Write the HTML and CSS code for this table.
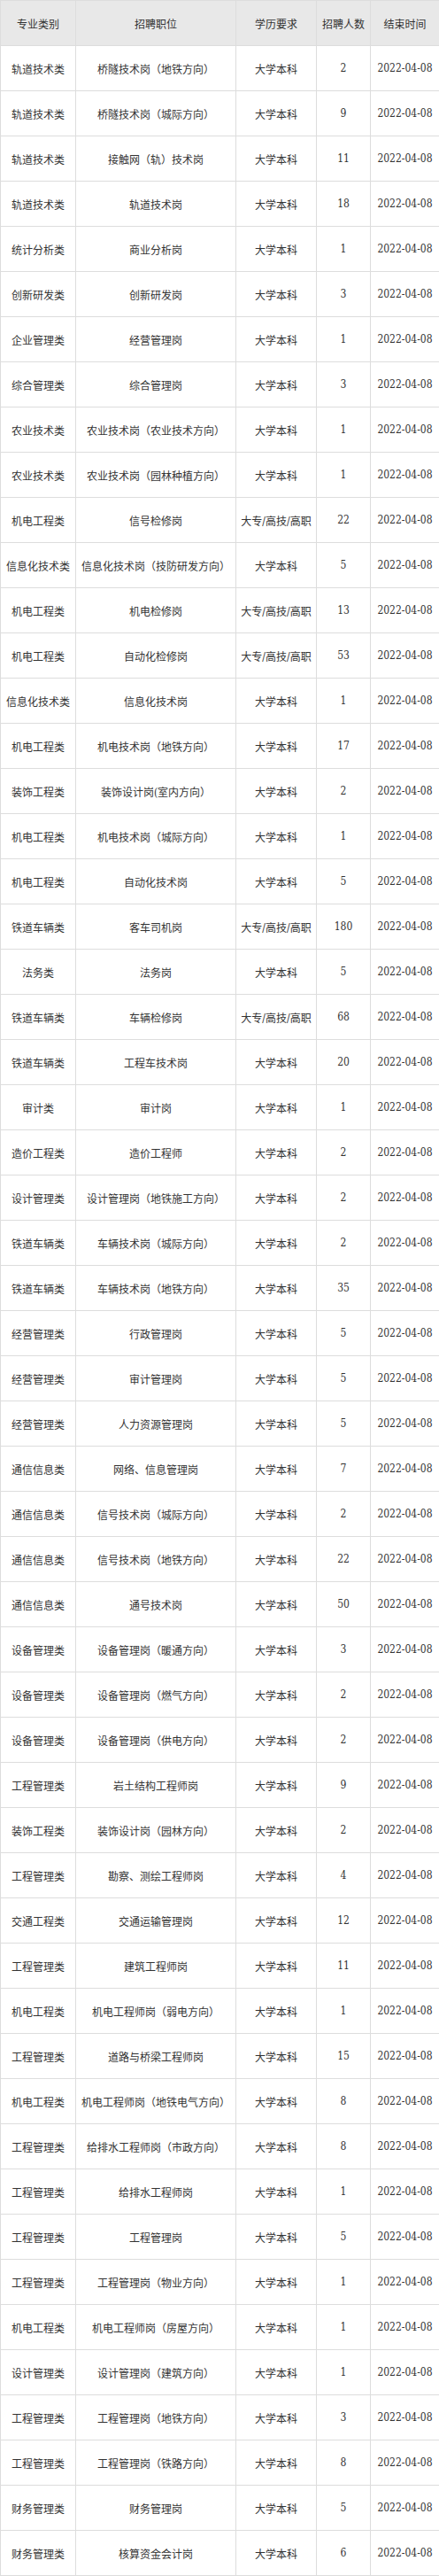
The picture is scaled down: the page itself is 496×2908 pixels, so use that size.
FILE: index.html
```html
<!DOCTYPE html>
<html lang="zh-CN">
<head>
<meta charset="utf-8">
<title>招聘职位</title>
<link rel="stylesheet" href="styles.css">
</head>
<body>
<table class="jobs">
  <colgroup>
    <col class="c-cat"><col class="c-pos"><col class="c-edu"><col class="c-num"><col class="c-date">
  </colgroup>
  <thead>
    <tr><th>专业类别</th><th>招聘职位</th><th>学历要求</th><th>招聘人数</th><th>结束时间</th></tr>
  </thead>
  <tbody>
    <tr><td>轨道技术类</td><td>桥隧技术岗（地铁方向）</td><td>大学本科</td><td>2</td><td>2022-04-08</td></tr>
    <tr><td>轨道技术类</td><td>桥隧技术岗（城际方向）</td><td>大学本科</td><td>9</td><td>2022-04-08</td></tr>
    <tr><td>轨道技术类</td><td>接触网（轨）技术岗</td><td>大学本科</td><td>11</td><td>2022-04-08</td></tr>
    <tr><td>轨道技术类</td><td>轨道技术岗</td><td>大学本科</td><td>18</td><td>2022-04-08</td></tr>
    <tr><td>统计分析类</td><td>商业分析岗</td><td>大学本科</td><td>1</td><td>2022-04-08</td></tr>
    <tr><td>创新研发类</td><td>创新研发岗</td><td>大学本科</td><td>3</td><td>2022-04-08</td></tr>
    <tr><td>企业管理类</td><td>经营管理岗</td><td>大学本科</td><td>1</td><td>2022-04-08</td></tr>
    <tr><td>综合管理类</td><td>综合管理岗</td><td>大学本科</td><td>3</td><td>2022-04-08</td></tr>
    <tr><td>农业技术类</td><td>农业技术岗（农业技术方向）</td><td>大学本科</td><td>1</td><td>2022-04-08</td></tr>
    <tr><td>农业技术类</td><td>农业技术岗（园林种植方向）</td><td>大学本科</td><td>1</td><td>2022-04-08</td></tr>
    <tr><td>机电工程类</td><td>信号检修岗</td><td>大专/高技/高职</td><td>22</td><td>2022-04-08</td></tr>
    <tr><td>信息化技术类</td><td>信息化技术岗（技防研发方向）</td><td>大学本科</td><td>5</td><td>2022-04-08</td></tr>
    <tr><td>机电工程类</td><td>机电检修岗</td><td>大专/高技/高职</td><td>13</td><td>2022-04-08</td></tr>
    <tr><td>机电工程类</td><td>自动化检修岗</td><td>大专/高技/高职</td><td>53</td><td>2022-04-08</td></tr>
    <tr><td>信息化技术类</td><td>信息化技术岗</td><td>大学本科</td><td>1</td><td>2022-04-08</td></tr>
    <tr><td>机电工程类</td><td>机电技术岗（地铁方向）</td><td>大学本科</td><td>17</td><td>2022-04-08</td></tr>
    <tr><td>装饰工程类</td><td>装饰设计岗(室内方向）</td><td>大学本科</td><td>2</td><td>2022-04-08</td></tr>
    <tr><td>机电工程类</td><td>机电技术岗（城际方向）</td><td>大学本科</td><td>1</td><td>2022-04-08</td></tr>
    <tr><td>机电工程类</td><td>自动化技术岗</td><td>大学本科</td><td>5</td><td>2022-04-08</td></tr>
    <tr><td>铁道车辆类</td><td>客车司机岗</td><td>大专/高技/高职</td><td>180</td><td>2022-04-08</td></tr>
    <tr><td>法务类</td><td>法务岗</td><td>大学本科</td><td>5</td><td>2022-04-08</td></tr>
    <tr><td>铁道车辆类</td><td>车辆检修岗</td><td>大专/高技/高职</td><td>68</td><td>2022-04-08</td></tr>
    <tr><td>铁道车辆类</td><td>工程车技术岗</td><td>大学本科</td><td>20</td><td>2022-04-08</td></tr>
    <tr><td>审计类</td><td>审计岗</td><td>大学本科</td><td>1</td><td>2022-04-08</td></tr>
    <tr><td>造价工程类</td><td>造价工程师</td><td>大学本科</td><td>2</td><td>2022-04-08</td></tr>
    <tr><td>设计管理类</td><td>设计管理岗（地铁施工方向）</td><td>大学本科</td><td>2</td><td>2022-04-08</td></tr>
    <tr><td>铁道车辆类</td><td>车辆技术岗（城际方向）</td><td>大学本科</td><td>2</td><td>2022-04-08</td></tr>
    <tr><td>铁道车辆类</td><td>车辆技术岗（地铁方向）</td><td>大学本科</td><td>35</td><td>2022-04-08</td></tr>
    <tr><td>经营管理类</td><td>行政管理岗</td><td>大学本科</td><td>5</td><td>2022-04-08</td></tr>
    <tr><td>经营管理类</td><td>审计管理岗</td><td>大学本科</td><td>5</td><td>2022-04-08</td></tr>
    <tr><td>经营管理类</td><td>人力资源管理岗</td><td>大学本科</td><td>5</td><td>2022-04-08</td></tr>
    <tr><td>通信信息类</td><td>网络、信息管理岗</td><td>大学本科</td><td>7</td><td>2022-04-08</td></tr>
    <tr><td>通信信息类</td><td>信号技术岗（城际方向）</td><td>大学本科</td><td>2</td><td>2022-04-08</td></tr>
    <tr><td>通信信息类</td><td>信号技术岗（地铁方向）</td><td>大学本科</td><td>22</td><td>2022-04-08</td></tr>
    <tr><td>通信信息类</td><td>通号技术岗</td><td>大学本科</td><td>50</td><td>2022-04-08</td></tr>
    <tr><td>设备管理类</td><td>设备管理岗（暖通方向）</td><td>大学本科</td><td>3</td><td>2022-04-08</td></tr>
    <tr><td>设备管理类</td><td>设备管理岗（燃气方向）</td><td>大学本科</td><td>2</td><td>2022-04-08</td></tr>
    <tr><td>设备管理类</td><td>设备管理岗（供电方向）</td><td>大学本科</td><td>2</td><td>2022-04-08</td></tr>
    <tr><td>工程管理类</td><td>岩土结构工程师岗</td><td>大学本科</td><td>9</td><td>2022-04-08</td></tr>
    <tr><td>装饰工程类</td><td>装饰设计岗（园林方向）</td><td>大学本科</td><td>2</td><td>2022-04-08</td></tr>
    <tr><td>工程管理类</td><td>勘察、测绘工程师岗</td><td>大学本科</td><td>4</td><td>2022-04-08</td></tr>
    <tr><td>交通工程类</td><td>交通运输管理岗</td><td>大学本科</td><td>12</td><td>2022-04-08</td></tr>
    <tr><td>工程管理类</td><td>建筑工程师岗</td><td>大学本科</td><td>11</td><td>2022-04-08</td></tr>
    <tr><td>机电工程类</td><td>机电工程师岗（弱电方向）</td><td>大学本科</td><td>1</td><td>2022-04-08</td></tr>
    <tr><td>工程管理类</td><td>道路与桥梁工程师岗</td><td>大学本科</td><td>15</td><td>2022-04-08</td></tr>
    <tr><td>机电工程类</td><td>机电工程师岗（地铁电气方向）</td><td>大学本科</td><td>8</td><td>2022-04-08</td></tr>
    <tr><td>工程管理类</td><td>给排水工程师岗（市政方向）</td><td>大学本科</td><td>8</td><td>2022-04-08</td></tr>
    <tr><td>工程管理类</td><td>给排水工程师岗</td><td>大学本科</td><td>1</td><td>2022-04-08</td></tr>
    <tr><td>工程管理类</td><td>工程管理岗</td><td>大学本科</td><td>5</td><td>2022-04-08</td></tr>
    <tr><td>工程管理类</td><td>工程管理岗（物业方向）</td><td>大学本科</td><td>1</td><td>2022-04-08</td></tr>
    <tr><td>机电工程类</td><td>机电工程师岗（房屋方向）</td><td>大学本科</td><td>1</td><td>2022-04-08</td></tr>
    <tr><td>设计管理类</td><td>设计管理岗（建筑方向）</td><td>大学本科</td><td>1</td><td>2022-04-08</td></tr>
    <tr><td>工程管理类</td><td>工程管理岗（地铁方向）</td><td>大学本科</td><td>3</td><td>2022-04-08</td></tr>
    <tr><td>工程管理类</td><td>工程管理岗（铁路方向）</td><td>大学本科</td><td>8</td><td>2022-04-08</td></tr>
    <tr><td>财务管理类</td><td>财务管理岗</td><td>大学本科</td><td>5</td><td>2022-04-08</td></tr>
    <tr><td>财务管理类</td><td>核算资金会计岗</td><td>大学本科</td><td>6</td><td>2022-04-08</td></tr>
  </tbody>
</table>
</body>
</html>
```
FILE: styles.css
```css
html, body {
  margin: 0;
  padding: 0;
  background: #ffffff;
}

.jobs {
  width: 496px;
  table-layout: fixed;
  border-collapse: collapse;
  font-family: "DejaVu Serif Condensed", "DejaVu Serif", "Noto Sans CJK SC", serif;
  font-stretch: condensed;
  font-size: 12px;
  color: #333333;
}

.c-cat { width: 85px; }
.c-pos { width: 181px; }
.c-edu { width: 91px; }
.c-num { width: 61px; }
.c-date { width: 78px; }

.jobs th,
.jobs td {
  height: 50px;
  padding: 0 2px;
  border: 1px solid #dddddd;
  text-align: center;
  vertical-align: middle;
  white-space: nowrap;
  font-weight: normal;
}

.jobs th {
  background: #e8e8e8;
}
```
